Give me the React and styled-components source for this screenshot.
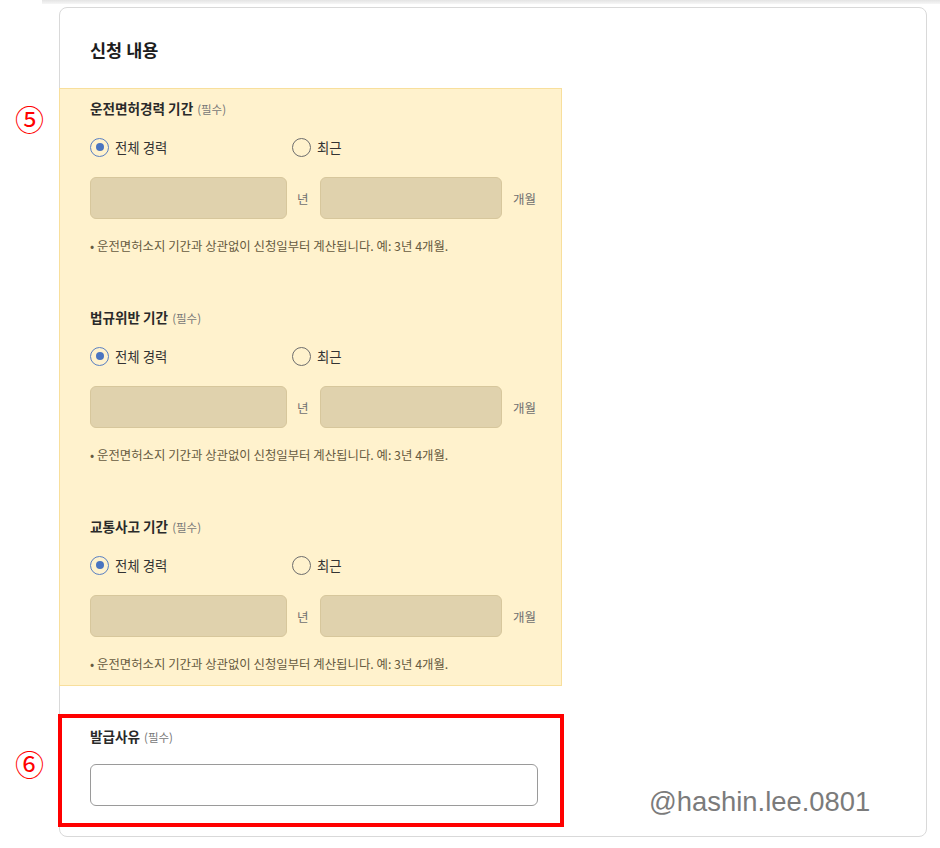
import React from 'react';
import styled, { createGlobalStyle } from 'styled-components';

const GlobalStyle = createGlobalStyle`
  body {
    margin: 0;
    background: #fff;
    font-family: 'Noto Sans CJK KR', 'Noto Sans', sans-serif;
    color: #222;
  }
`;

const Page = styled.div`
  position: relative;
  width: 940px;
  height: 848px;
  overflow: hidden;
`;

const TopEdge = styled.div`
  margin-left: 42px;
  height: 4px;
  background: linear-gradient(#e4e4e4, #f6f6f6);
`;

const Card = styled.div`
  position: relative;
  margin: 3px 0 0 59px;
  width: 868px;
  height: 830px;
  box-sizing: border-box;
  border: 1px solid #d9d9d9;
  border-radius: 8px;
  padding: 30px 0 0;
`;

const CardTitle = styled.h2`
  margin: 0 0 26px 30px;
  height: 24px;
  font-size: 17.5px;
  line-height: 24px;
  font-weight: 700;
  color: #1d1d1d;
`;

const Periods = styled.div`
  margin-left: -1px;
  width: 503px;
  box-sizing: border-box;
  background: #fff2cd;
  border: 1px solid #f8df9c;
  padding: 10px 30px 13px;
  display: flex;
  flex-direction: column;
  gap: 54px;
`;

const Section = styled.div`
  display: flex;
  flex-direction: column;
`;

const Label = styled.div`
  display: flex;
  align-items: baseline;
  height: 18px;
  font-size: 13.6px;
  line-height: 18px;
  font-weight: 700;
  color: #2a2a2a;
  white-space: nowrap;
`;

const Required = styled.span`
  margin-left: 4px;
  font-size: 11.5px;
  font-weight: 400;
  color: #777;
`;

const RadioGroup = styled.div`
  margin-top: 20px;
  display: grid;
  grid-template-columns: 202px auto;
  height: 20px;
`;

const RadioOption = styled.label`
  display: flex;
  align-items: center;
  gap: 6px;
  height: 20px;
  font-size: 13.4px;
  color: #333;
  white-space: nowrap;
`;

const RadioMark = styled.span`
  flex-shrink: 0;
  width: 19px;
  height: 19px;
  box-sizing: border-box;
  border-radius: 50%;
  border: 1.5px solid ${p => (p.checked ? '#5a80c2' : '#6d6d6d')};
  display: flex;
  align-items: center;
  justify-content: center;
  &::after {
    content: '';
    width: 8px;
    height: 8px;
    border-radius: 50%;
    background: ${p => (p.checked ? '#4a74c0' : 'transparent')};
  }
`;

const InputRow = styled.div`
  margin-top: 20px;
  height: 42px;
  display: flex;
  align-items: center;
  white-space: nowrap;
`;

const Field = styled.div`
  flex-shrink: 0;
  width: ${p => p.width}px;
  height: 42px;
  box-sizing: border-box;
  border-radius: 6px;
  background: ${p => (p.light ? '#fff' : '#e0d2ad')};
  border: 1px solid ${p => (p.light ? '#9a9a9a' : '#d7c79c')};
`;

const Unit = styled.span`
  flex-shrink: 0;
  width: ${p => p.width}px;
  margin-left: ${p => p.before}px;
  font-size: 12.5px;
  color: #707070;
`;

const Note = styled.div`
  margin-top: 19px;
  height: 16px;
  font-size: 12.4px;
  line-height: 16px;
  color: #665a40;
  white-space: nowrap;
`;

const Highlight = styled.div`
  margin: 28px 0 0 -2px;
  width: 506px;
  box-sizing: border-box;
  border: 4px solid #ff0000;
  padding: 9px 28px 17px;
`;

const ReasonInput = styled(Field)`
  margin-top: 19px;
`;

const Watermark = styled.div`
  position: absolute;
  left: 589px;
  top: 780px;
  font-family: 'Liberation Sans', Arial, sans-serif;
  font-size: 27.4px;
  line-height: 28px;
  color: #7b7b7b;
`;

const Marker = styled.div`
  position: absolute;
  left: 15px;
  top: ${p => p.top}px;
  font-size: 29px;
  line-height: 29px;
  color: #ff0000;
`;

const sections = ['운전면허경력 기간', '법규위반 기간', '교통사고 기간'];

function PeriodSection({ title }) {
  return (
    <Section>
      <Label>
        {title}
        <Required>(필수)</Required>
      </Label>
      <RadioGroup>
        <RadioOption>
          <RadioMark checked />
          전체 경력
        </RadioOption>
        <RadioOption>
          <RadioMark />
          최근
        </RadioOption>
      </RadioGroup>
      <InputRow>
        <Field width={197} />
        <Unit before={10} width={23}>년</Unit>
        <Field width={182} />
        <Unit before={11} width={26}>개월</Unit>
      </InputRow>
      <Note>• 운전면허소지 기간과 상관없이 신청일부터 계산됩니다. 예: 3년 4개월.</Note>
    </Section>
  );
}

export default function App() {
  return (
    <Page>
      <GlobalStyle />
      <TopEdge />
      <Card>
        <CardTitle>신청 내용</CardTitle>
        <Periods>
          {sections.map(s => (
            <PeriodSection key={s} title={s} />
          ))}
        </Periods>
        <Highlight>
          <Label>
            발급사유
            <Required>(필수)</Required>
          </Label>
          <ReasonInput width={448} light />
        </Highlight>
        <Watermark>@hashin.lee.0801</Watermark>
      </Card>
      <Marker top={104}>⑤</Marker>
      <Marker top={749}>⑥</Marker>
    </Page>
  );
}
